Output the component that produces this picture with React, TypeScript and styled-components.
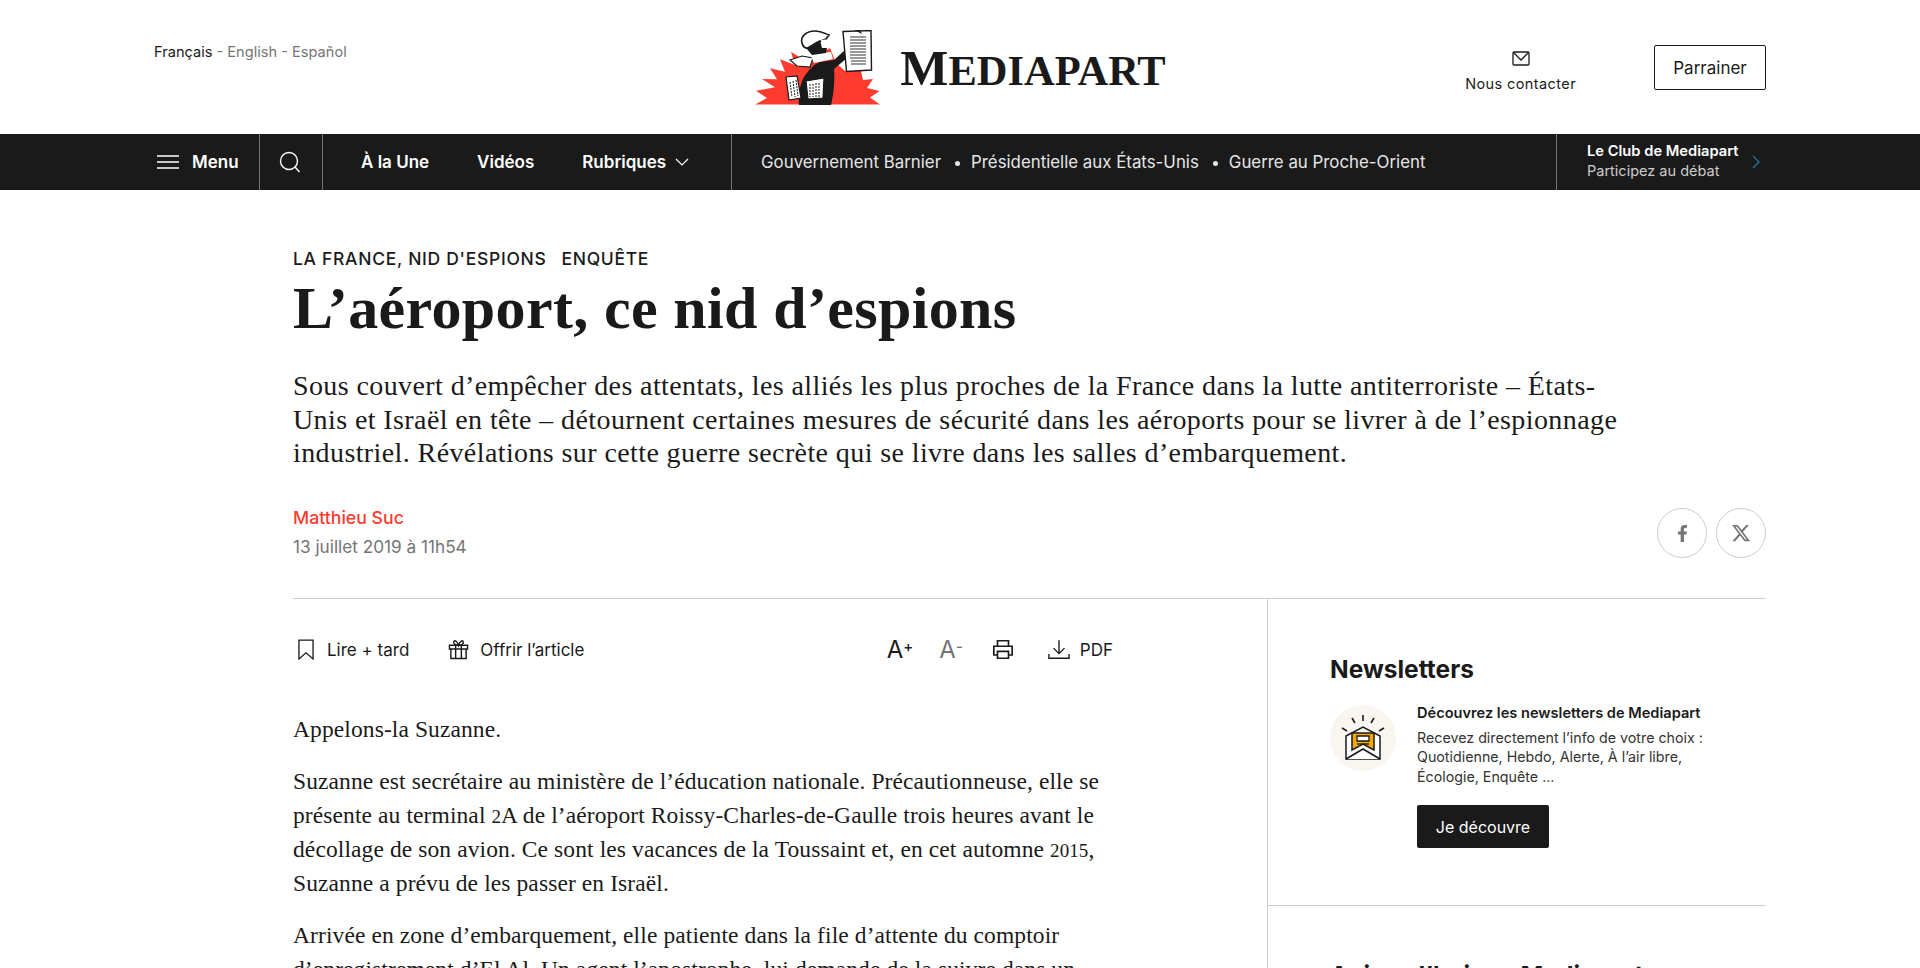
import React from "react";
import styled, { createGlobalStyle } from "styled-components";
import { FaFacebookF } from "react-icons/fa";
import { FaXTwitter } from "react-icons/fa6";

const SANS = `Inter, "Liberation Sans", sans-serif`;
const SERIF = `"Liberation Serif", serif`;
const INK = "#1a1a1a";

const Global = createGlobalStyle`
  html, body { margin: 0; padding: 0; background: #fff; }
  body { color: ${INK}; font-family: ${SANS}; height: 968px; overflow: hidden; }
  * { box-sizing: border-box; }
`;

const Masthead = styled.header`
  height: 134px;
  padding: 0 154px;
  display: grid;
  grid-template-columns: 1fr auto 1fr;
  align-items: start;
`;
const Langs = styled.div`
  padding-top: 43px;
  font-size: 14.6px;
  line-height: 18px;
  color: #757575;
`;
const Lang = styled.span<{ $active?: boolean }>`
  color: ${(p) => (p.$active ? INK : "#757575")};
`;
const LogoLink = styled.div`
  display: flex;
  align-items: center;
  gap: 19px;
  height: 134px;
  padding-top: 2px;
`;
const Wordmark = styled.div`
  font-family: ${SERIF};
  font-weight: 700;
  font-size: 42.5px;
  line-height: 50px;
  color: ${INK};
  margin-top: 2px;
  white-space: nowrap;
  &::first-letter {
    font-size: 51px;
  }
`;
const HeadRight = styled.div`
  display: flex;
  justify-content: flex-end;
  align-items: flex-start;
  gap: 78px;
  padding-top: 45px;
`;
const Contact = styled.div`
  display: flex;
  flex-direction: column;
  align-items: center;
  gap: 9px;
  padding-top: 6px;
  font-size: 14.5px;
  line-height: 18px;
  letter-spacing: 0.4px;
`;
const OutlineBtn = styled.button`
  width: 112px;
  height: 45px;
  background: #fff;
  border: 1px solid ${INK};
  border-radius: 2px;
  color: ${INK};
  font: 400 17px ${SANS};
`;

const NavBar = styled.nav`
  height: 56px;
  background: ${INK};
  color: #fff;
  display: flex;
  align-items: stretch;
`;
const NavCell = styled.div<{ $w: number; $pad?: number; $gap?: number }>`
  width: ${(p) => p.$w}px;
  flex: none;
  display: flex;
  align-items: center;
  gap: ${(p) => p.$gap ?? 0}px;
  padding-left: ${(p) => p.$pad ?? 0}px;
  border-right: 1px solid #757575;
`;
const NavLabel = styled.span`
  font-size: 17px;
  font-weight: 600;
  white-space: nowrap;
`;
const RubLabel = styled(NavLabel)`
  display: inline-flex;
  align-items: center;
  gap: 9px;
`;
const Topics = styled.div`
  flex: 1;
  display: flex;
  align-items: center;
  padding-left: 29px;
  border-right: 1px solid #757575;
`;
const Topic = styled.span`
  font-size: 16.85px;
  color: #e6e6e6;
  white-space: nowrap;
`;
const Dot = styled.i`
  width: 5px;
  height: 5px;
  border-radius: 50%;
  background: #e6e6e6;
  margin: 2px 11px 0 14px;
`;
const ClubCell = styled.div`
  width: 363px;
  flex: none;
  display: flex;
  align-items: center;
  gap: 14px;
  padding-left: 30px;
`;
const ClubText = styled.div`
  display: flex;
  flex-direction: column;
  line-height: 19px;
  margin-top: -2px;
`;
const ClubTitle = styled.span`
  font-weight: 600;
  font-size: 14.7px;
`;
const ClubSub = styled.span`
  color: #ccc;
  font-size: 14.5px;
`;

const Main = styled.main`
  padding: 0 154px 0 293px;
`;
const Kicker = styled.div`
  margin-top: 57px;
  display: flex;
  gap: 15px;
  font-size: 17.5px;
  line-height: 24px;
  font-weight: 500;
  letter-spacing: 0.7px;
`;
const Title = styled.h1`
  margin: 7px 0 0;
  font-family: ${SERIF};
  font-weight: 700;
  font-size: 60px;
  line-height: 60px;
  letter-spacing: 0.36px;
  color: ${INK};
`;
const Lead = styled.p`
  margin: 31px 0 0;
  width: 1340px;
  font-family: ${SERIF};
  font-size: 28px;
  line-height: 33.6px;
  letter-spacing: 0.4px;
  color: ${INK};
`;
const MetaRow = styled.div`
  margin-top: 36px;
  display: flex;
  justify-content: space-between;
  align-items: center;
  padding-bottom: 39px;
  border-bottom: 1px solid #ccc;
`;
const Author = styled.div`
  color: #ff3b30;
  font-size: 17.7px;
  font-weight: 500;
  line-height: 24px;
`;
const DateLine = styled.div`
  margin-top: 5px;
  color: #757575;
  font-size: 17.2px;
  line-height: 24px;
`;
const Socials = styled.div`
  display: flex;
  gap: 9px;
  margin-top: 2px;
`;
const Round = styled.span`
  width: 50px;
  height: 50px;
  border: 1px solid #ccc;
  border-radius: 50%;
  display: flex;
  align-items: center;
  justify-content: center;
  color: #757575;
`;

const Columns = styled.div`
  display: flex;
`;
const ArticleCol = styled.div`
  width: 975px;
  flex: none;
  border-right: 1px solid #ccc;
  height: 369px;
  overflow: hidden;
`;
const Toolbar = styled.div`
  width: 820px;
  height: 100px;
  display: flex;
  justify-content: space-between;
  align-items: center;
  padding: 2px 0 0 5px;
  font-size: 17px;
`;
const ToolGroup = styled.div<{ $gap: number }>`
  display: flex;
  align-items: center;
  gap: ${(p) => p.$gap}px;
`;
const Tool = styled.span<{ $gap?: number }>`
  display: inline-flex;
  align-items: center;
  gap: ${(p) => p.$gap ?? 11}px;
`;
const SizeTool = styled.span<{ $off?: boolean }>`
  font-size: 24px;
  line-height: 24px;
  color: ${(p) => (p.$off ? "#757575" : INK)};
  font-weight: 400;
  sup {
    font-size: 15px;
    line-height: 0;
    vertical-align: 6px;
    font-weight: 500;
  }
`;
const PrintSlot = styled.span`
  display: flex;
  margin: 0 8px 0 3px;
`;
const Body = styled.div`
  width: 820px;
  margin-top: 14px;
`;
const Para = styled.p`
  margin: 0 0 19px;
  font-family: ${SERIF};
  font-size: 23.5px;
  line-height: 33.7px;
  letter-spacing: 0.1px;
  color: ${INK};
`;
const OldNum = styled.span`
  font-size: 19px;
  line-height: 0;
`;
const Sidebar = styled.aside`
  flex: 1;
`;
const SideBlock = styled.section`
  padding: 54px 0 57px 62px;
  border-bottom: 1px solid #ccc;
`;
const SideHeading = styled.h2<{ $pad?: boolean }>`
  margin: 0;
  font-size: 24.5px;
  line-height: 32px;
  font-weight: 700;
  padding-left: ${(p) => (p.$pad ? "62px" : "0")};
  padding-top: ${(p) => (p.$pad ? "53px" : "0")};
`;
const NewsRow = styled.div`
  margin-top: 18px;
  display: flex;
  gap: 21px;
`;
const NewsIcon = styled.div`
  width: 66px;
  height: 66px;
  flex: none;
  margin-top: 2px;
  border-radius: 50%;
  background: #f9f6f2;
`;
const NewsTitle = styled.div`
  font-size: 14.6px;
  line-height: 20px;
  font-weight: 600;
`;
const NewsDesc = styled.div`
  margin-top: 5px;
  font-size: 14.25px;
  line-height: 19.5px;
  color: #333;
`;
const DarkBtn = styled.button`
  display: block;
  margin-top: 19px;
  width: 132px;
  height: 43px;
  border: 0;
  border-radius: 2px;
  background: ${INK};
  color: #fff;
  font: 400 16px ${SANS};
`;

const Logo = () => (
  <svg width="127" height="76" viewBox="4 4 127 76">
    <path
      fill="#ff3b2f"
      d="M5 78.5 17 72 6 64.7 25 61.3 12 53 27 53.3 20 42.3 35 45.7 30 33.3 45 39 41 25.7 57 36 80 22 86 37 95 45 111 45 113 54 123 53 117 62 129.5 65 120 71.5 130 78.5Z"
    />
    <path
      fill={INK}
      d="M49 79C48 68 50 56 56 48 60 43 64 38 70 36L84 34 95 24 97 32 84 43C85 52 84 66 81 79Z"
    />
    <path fill="#fff" stroke={INK} strokeWidth="1.2" d="M40 34 52 30 63 32 60 41 47 40Z" />
    <path fill="#fff" d="M60 28 81 26 83 33 64 37Z" />
    <path
      fill="#fff"
      stroke={INK}
      strokeWidth="1.6"
      d="M52 17C50 10 57 5 65 5 70 5 74 7 79 9L76 13C72 14 65 18 60 22 56 23 53 21 52 17Z"
    />
    <path fill={INK} d="M56 22 66 16 70 14 72 22 77 22 76 27 62 29Z" />
    <path fill="#fff" d="M71 14 76 13.500 77 21 72 21Z" />
    <path fill="#fff" stroke={INK} strokeWidth="1.2" d="M36 51 47 50 51 72 39 74Z" />
    <path fill="#fff" stroke={INK} strokeWidth="1.2" d="M56 55 74 52 73 72 58 73Z" />
    <path
      stroke={INK}
      strokeWidth="1"
      fill="none"
      strokeDasharray="2 1"
      d="M40 56 42 71M43 55 45 71M46 54 48 70M60 58V71M63 58V71M66 57V71M69 57V71"
    />
    <path fill="#fff" stroke={INK} strokeWidth="1.4" d="M93 5.500 121 4.500 121.500 44 96.500 45.500Z" />
    <path fill={INK} d="M104 4 109 2 112 8 108 6Z" />
    <path
      stroke="#333"
      strokeWidth="1.2"
      d="M100 11H116M100 14H116M100 17H116M100 20H116M100 23H116M100 26H116M100 29H116M100 32H116M101 35H116M101 38H116"
    />
  </svg>
);

const MenuIcon = () => (
  <svg width="22" height="14" viewBox="0 0 22 14" fill="none" stroke="#fff" strokeWidth="1.5">
    <path d="M0 1H22M0 7H22M0 13H22" />
  </svg>
);
const SearchIcon = () => (
  <svg width="22" height="22" viewBox="0 0 22 22" fill="none" stroke="#fff" strokeWidth="1.4">
    <circle cx="10" cy="10" r="8.500" />
    <path d="M16 16 20.500 21" />
  </svg>
);
const Chevron = () => (
  <svg width="14" height="8" viewBox="0 0 14 8" fill="none" stroke="#fff" strokeWidth="1.2">
    <path d="M1 1 7 7 13 1" />
  </svg>
);
const BlueChevron = () => (
  <svg width="8" height="14" viewBox="0 0 8 14" fill="none" stroke="#1f78a8" strokeWidth="1.3">
    <path d="M1 1 7 7 1 13" />
  </svg>
);
const MailIcon = () => (
  <svg width="18" height="15" viewBox="0 0 18 15" fill="none" stroke={INK} strokeWidth="1.3">
    <rect x="1" y="1" width="16" height="13" rx="1" />
    <path d="M1.500 1.500 9 9 16.500 1.500" />
  </svg>
);
const BookmarkIcon = () => (
  <svg width="16" height="21" viewBox="0 0 17 22" fill="none" stroke={INK} strokeWidth="1.4">
    <path d="M1 1H16V21L8.500 14.500 1 21Z" />
  </svg>
);
const GiftIcon = () => (
  <svg width="21" height="21" viewBox="0 0 22 22" fill="none" stroke={INK} strokeWidth="1.5">
    <path d="M1.500 6.500H20.500V10.500H1.500ZM3 10.500V20.500H19V10.500M8 6.500V20.500M14 6.500V20.500" />
    <path d="M11 6.500C8 6.500 5.500 5 6 3 6.500 1 9.500 1.500 11 6.500 12.500 1.500 15.500 1 16 3 16.500 5 14 6.500 11 6.500Z" />
  </svg>
);
const PrintIcon = () => (
  <svg width="22" height="21" viewBox="0 0 24 22" fill="none" stroke={INK} strokeWidth="1.8">
    <path d="M6 7V1.500H18V7M6 17H2V7.500H22V17H18" />
    <path d="M6 13H18V20.500H6Z" />
  </svg>
);
const DownloadIcon = () => (
  <svg width="22" height="21" viewBox="0 0 24 22" fill="none" stroke={INK} strokeWidth="1.5">
    <path d="M12 1V15M6 9.500 12 15.500 18 9.500M1 16V20.500H23V16" />
  </svg>
);
const EnvelopeArt = () => (
  <svg width="66" height="66" viewBox="0 0 66 66" fill="none" stroke={INK} strokeWidth="1.5">
    <path d="M33 10V16M22 13 25 18M44 13 41 18M12 23 17 26M54 23 49 26" strokeWidth="1.6" />
    <path d="M16 31 33 22 50 31V54H16Z" fill="#fff" />
    <path d="M22 28H44V45L33 39 22 45Z" fill="#f5a800" />
    <path d="M27 31H39V36H27Z" fill="#fff" strokeWidth="1.3" />
    <path d="M27 39H39" strokeWidth="1.3" />
    <path d="M16 54 33 44 50 54" fill="#fff" strokeWidth="1.6" />
  </svg>
);

export default function App() {
  return (
    <>
      <Global />
      <Masthead>
        <Langs>
          <Lang $active>Français</Lang> - <Lang>English</Lang> - <Lang>Español</Lang>
        </Langs>
        <LogoLink>
          <Logo />
          <Wordmark>MEDIAPART</Wordmark>
        </LogoLink>
        <HeadRight>
          <Contact>
            <MailIcon />
            Nous contacter
          </Contact>
          <OutlineBtn>Parrainer</OutlineBtn>
        </HeadRight>
      </Masthead>

      <NavBar>
        <NavCell $w={260} $pad={157} $gap={13}>
          <MenuIcon />
          <NavLabel>Menu</NavLabel>
        </NavCell>
        <NavCell $w={63} $pad={19}>
          <SearchIcon />
        </NavCell>
        <NavCell $w={409} $pad={38} $gap={48}>
          <NavLabel>À la Une</NavLabel>
          <NavLabel>Vidéos</NavLabel>
          <RubLabel>
            Rubriques <Chevron />
          </RubLabel>
        </NavCell>
        <Topics>
          <Topic>Gouvernement Barnier</Topic>
          <Dot />
          <Topic>Présidentielle aux États-Unis</Topic>
          <Dot />
          <Topic>Guerre au Proche-Orient</Topic>
        </Topics>
        <ClubCell>
          <ClubText>
            <ClubTitle>Le Club de Mediapart</ClubTitle>
            <ClubSub>Participez au débat</ClubSub>
          </ClubText>
          <BlueChevron />
        </ClubCell>
      </NavBar>

      <Main>
        <Kicker>
          <span>LA FRANCE, NID D'ESPIONS</span>
          <span>ENQUÊTE</span>
        </Kicker>
        <Title>L’aéroport, ce nid d’espions</Title>
        <Lead>
          Sous couvert d’empêcher des attentats, les alliés les plus proches de la France dans la
          lutte antiterroriste – États-Unis et Israël en tête – détournent certaines mesures de
          sécurité dans les aéroports pour se livrer à de l’espionnage industriel. Révélations sur
          cette guerre secrète qui se livre dans les salles d’embarquement.
        </Lead>
        <MetaRow>
          <div>
            <Author>Matthieu Suc</Author>
            <DateLine>13 juillet 2019 à 11h54</DateLine>
          </div>
          <Socials>
            <Round>
              <FaFacebookF size={17} />
            </Round>
            <Round>
              <FaXTwitter size={20} />
            </Round>
          </Socials>
        </MetaRow>
        <Columns>
          <ArticleCol>
            <Toolbar>
              <ToolGroup $gap={39}>
                <Tool $gap={13}>
                  <BookmarkIcon />
                  Lire + tard
                </Tool>
                <Tool>
                  <GiftIcon />
                  Offrir l’article
                </Tool>
              </ToolGroup>
              <ToolGroup $gap={26}>
                <SizeTool>
                  A<sup>+</sup>
                </SizeTool>
                <SizeTool $off>
                  A<sup>-</sup>
                </SizeTool>
                <PrintSlot>
                  <PrintIcon />
                </PrintSlot>
                <Tool $gap={10}>
                  <DownloadIcon />
                  PDF
                </Tool>
              </ToolGroup>
            </Toolbar>
            <Body>
              <Para>Appelons-la Suzanne.</Para>
              <Para>
                Suzanne est secrétaire au ministère de l’éducation nationale. Précautionneuse, elle
                se présente au terminal <OldNum>2</OldNum>A de l’aéroport Roissy-Charles-de-Gaulle
                trois heures avant le décollage de son avion. Ce sont les vacances de la Toussaint
                et, en cet automne <OldNum>2015</OldNum>, Suzanne a prévu de les passer en Israël.
              </Para>
              <Para>
                Arrivée en zone d’embarquement, elle patiente dans la file d’attente du comptoir
                d’enregistrement d’El Al. Un agent l’apostrophe, lui demande de la suivre dans un
              </Para>
            </Body>
          </ArticleCol>
          <Sidebar>
            <SideBlock>
              <SideHeading>Newsletters</SideHeading>
              <NewsRow>
                <NewsIcon>
                  <EnvelopeArt />
                </NewsIcon>
                <div>
                  <NewsTitle>Découvrez les newsletters de Mediapart</NewsTitle>
                  <NewsDesc>
                    Recevez directement l’info de votre choix :
                    <br />
                    Quotidienne, Hebdo, Alerte, À l’air libre,
                    <br />
                    Écologie, Enquête ...
                  </NewsDesc>
                  <DarkBtn>Je découvre</DarkBtn>
                </div>
              </NewsRow>
            </SideBlock>
            <SideHeading $pad>Aujourd’hui sur Mediapart</SideHeading>
          </Sidebar>
        </Columns>
      </Main>
    </>
  );
}
